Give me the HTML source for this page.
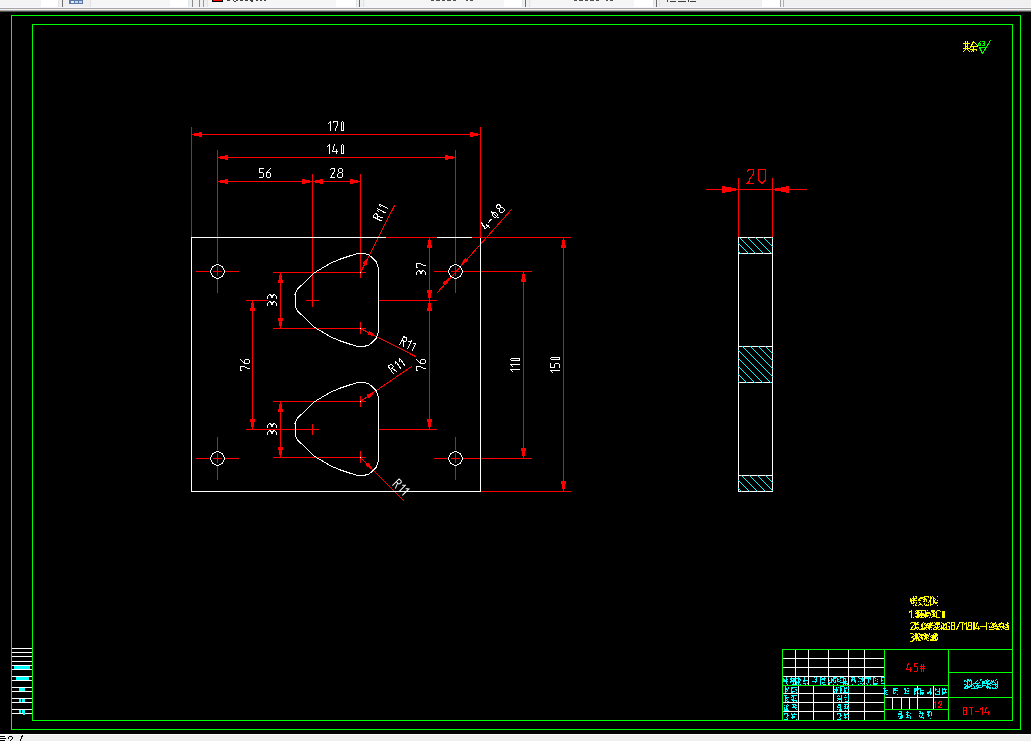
<!DOCTYPE html>
<html><head><meta charset="utf-8"><title>CAD</title>
<style>
html,body{margin:0;padding:0;background:#000;overflow:hidden;}
body{width:1031px;height:741px;position:relative;font-family:"Liberation Sans",sans-serif;}
svg{position:absolute;left:0;top:0;display:block;}
</style></head><body>
<svg width="1031" height="741" viewBox="0 0 1031 741" shape-rendering="crispEdges" fill="none" stroke-width="1" stroke-linecap="square" stroke-linejoin="miter">
<rect x="0" y="0" width="1031" height="741" fill="#000"/>
<rect x="0" y="0" width="1031" height="7" fill="#f0f0f0"/>
<rect x="0" y="0" width="41" height="7" fill="#f3f3f3"/>
<rect x="41" y="0" width="17" height="7" fill="#ffffff"/>
<rect x="58" y="0" width="1" height="7" fill="#e4e4e4"/>
<rect x="62" y="0" width="1" height="7" fill="#707070"/>
<rect x="63" y="0" width="27" height="7" fill="#efefef"/>
<rect x="90" y="0" width="1" height="7" fill="#e0e0e0"/>
<rect x="91" y="0" width="79" height="7" fill="#f5f5f5"/>
<rect x="170" y="0" width="18" height="7" fill="#ffffff"/>
<rect x="188" y="0" width="1" height="7" fill="#dfe3ea"/>
<rect x="192" y="0" width="1" height="7" fill="#8a8a8a"/>
<rect x="199" y="0" width="1" height="7" fill="#8a8a8a"/>
<rect x="203" y="0" width="1" height="7" fill="#9a9a9a"/>
<rect x="207" y="0" width="1" height="7" fill="#dfe3ea"/>
<rect x="208" y="0" width="128" height="7" fill="#f5f5f5"/>
<rect x="336" y="0" width="20" height="7" fill="#ffffff"/>
<rect x="356" y="0" width="1" height="7" fill="#dfe3ea"/>
<rect x="359" y="0" width="1" height="7" fill="#6a6a6a"/>
<rect x="363" y="0" width="1" height="7" fill="#dfe3ea"/>
<rect x="365" y="0" width="139" height="7" fill="#f5f5f5"/>
<rect x="504" y="0" width="18" height="7" fill="#ffffff"/>
<rect x="522" y="0" width="1" height="7" fill="#dfe3ea"/>
<rect x="525" y="0" width="1" height="7" fill="#6a6a6a"/>
<rect x="529" y="0" width="1" height="7" fill="#dfe3ea"/>
<rect x="531" y="0" width="103" height="7" fill="#f5f5f5"/>
<rect x="634" y="0" width="19" height="7" fill="#ffffff"/>
<rect x="653" y="0" width="1" height="7" fill="#dfe3ea"/>
<rect x="656" y="0" width="1" height="7" fill="#6a6a6a"/>
<rect x="659" y="0" width="1" height="7" fill="#dfe3ea"/>
<rect x="660" y="0" width="102" height="7" fill="#f0f0f0"/>
<rect x="762" y="0" width="18" height="7" fill="#ffffff"/>
<rect x="780" y="0" width="1" height="7" fill="#a0a0a0"/>
<rect x="783" y="0" width="1" height="7" fill="#b0b0b0"/>
<rect x="69" y="0" width="14" height="4" fill="#5b79a6"/>
<rect x="71" y="1" width="3" height="2" fill="#e8eef8"/>
<rect x="75" y="1" width="3" height="2" fill="#c8d4e8"/>
<rect x="79" y="1" width="3" height="2" fill="#c8d4e8"/>
<rect x="212" y="0" width="11" height="2" fill="#000000"/>
<rect x="213" y="0" width="9" height="1" fill="#ff0000"/>
<rect x="227" y="0" width="3" height="1" fill="#404040"/>
<rect x="233" y="0" width="1" height="1" fill="#404040"/>
<rect x="236" y="0" width="2" height="1" fill="#404040"/>
<rect x="240" y="0" width="3" height="1" fill="#404040"/>
<rect x="245" y="0" width="3" height="1" fill="#404040"/>
<rect x="250" y="0" width="3" height="1" fill="#404040"/>
<rect x="256" y="0" width="2" height="1" fill="#404040"/>
<rect x="260" y="0" width="2" height="1" fill="#404040"/>
<rect x="264" y="0" width="2" height="1" fill="#404040"/>
<rect x="234" y="1" width="2" height="1" fill="#404040"/>
<rect x="251" y="1" width="2" height="1" fill="#404040"/>
<rect x="431" y="0" width="3" height="1" fill="#505050"/>
<rect x="436" y="0" width="4" height="1" fill="#505050"/>
<rect x="442" y="0" width="3" height="1" fill="#505050"/>
<rect x="447" y="0" width="4" height="1" fill="#505050"/>
<rect x="453" y="0" width="3" height="1" fill="#505050"/>
<rect x="466" y="0" width="2" height="1" fill="#505050"/>
<rect x="470" y="0" width="3" height="1" fill="#505050"/>
<rect x="574" y="0" width="3" height="1" fill="#505050"/>
<rect x="579" y="0" width="4" height="1" fill="#505050"/>
<rect x="585" y="0" width="3" height="1" fill="#505050"/>
<rect x="590" y="0" width="4" height="1" fill="#505050"/>
<rect x="596" y="0" width="3" height="1" fill="#505050"/>
<rect x="606" y="0" width="2" height="1" fill="#505050"/>
<rect x="610" y="0" width="3" height="1" fill="#505050"/>
<rect x="667" y="0" width="1" height="2" fill="#404040"/>
<rect x="670" y="1" width="6" height="1" fill="#404040"/>
<rect x="678" y="1" width="8" height="1" fill="#404040"/>
<rect x="688" y="0" width="1" height="2" fill="#404040"/>
<rect x="690" y="1" width="6" height="1" fill="#404040"/>
<rect x="0" y="7" width="1031" height="1" fill="#f4f7fb"/>
<rect x="0" y="8" width="1031" height="1" fill="#a6a6a6"/>
<rect x="0" y="9" width="1031" height="1" fill="#f2f2f2"/>
<rect x="0" y="10" width="1031" height="1" fill="#a8a8a8"/>
<rect x="0" y="11" width="1031" height="1" fill="#505050"/>
<rect x="0" y="734" width="1031" height="1" fill="#ffffff"/>
<rect x="0" y="735" width="1031" height="6" fill="#efefef"/>
<rect x="0" y="734" width="6" height="7" fill="#ffffff"/>
<rect x="0" y="736" width="5" height="1" fill="#000000"/>
<rect x="0" y="738" width="6" height="1" fill="#000000"/>
<rect x="0" y="740" width="5" height="1" fill="#000000"/>
<path d="M8.50 738.50L8.50 737.50L9.50 736.50L11.50 736.50L12.50 737.50L12.50 738.50L10.50 740.50" stroke="#000000"/>
<path d="M22.50 735.50L21.50 737.50L20.50 740.50" stroke="#000000"/>
<rect x="11" y="15" width="1010" height="1" fill="#00ff00"/>
<rect x="11" y="729" width="1010" height="1" fill="#00ff00"/>
<rect x="11" y="15" width="1" height="715" fill="#00ff00"/>
<rect x="1020" y="15" width="1" height="715" fill="#00ff00"/>
<rect x="32" y="24" width="981" height="1" fill="#00ff00"/>
<rect x="32" y="720" width="981" height="1" fill="#00ff00"/>
<rect x="32" y="24" width="1" height="697" fill="#00ff00"/>
<rect x="1012" y="24" width="1" height="697" fill="#00ff00"/>
<rect x="12" y="648" width="20" height="1" fill="#ffffff"/>
<rect x="12" y="652" width="20" height="1" fill="#ffffff"/>
<rect x="12" y="656" width="20" height="1" fill="#ffffff"/>
<rect x="12" y="661" width="20" height="1" fill="#ffffff"/>
<rect x="12" y="665" width="20" height="1" fill="#ffffff"/>
<rect x="12" y="669" width="20" height="1" fill="#ffffff"/>
<rect x="12" y="676" width="20" height="1" fill="#ffffff"/>
<rect x="12" y="680" width="20" height="1" fill="#ffffff"/>
<rect x="12" y="687" width="20" height="1" fill="#ffffff"/>
<rect x="12" y="691" width="20" height="1" fill="#ffffff"/>
<rect x="12" y="698" width="20" height="1" fill="#ffffff"/>
<rect x="12" y="702" width="20" height="1" fill="#ffffff"/>
<rect x="12" y="709" width="20" height="1" fill="#ffffff"/>
<rect x="12" y="713" width="20" height="1" fill="#ffffff"/>
<rect x="14" y="666" width="16" height="3" fill="#00ffff"/>
<rect x="16" y="677" width="13" height="3" fill="#00ffff"/>
<rect x="19" y="688" width="6" height="3" fill="#00ffff"/>
<rect x="19" y="699" width="2" height="3" fill="#00ffff"/>
<rect x="22" y="699" width="3" height="3" fill="#00ffff"/>
<rect x="19" y="710" width="2" height="3" fill="#00ffff"/>
<rect x="22" y="710" width="3" height="3" fill="#00ffff"/>
<rect x="23" y="713" width="2" height="2" fill="#00ffff"/>
<rect x="191" y="127" width="1" height="110" fill="#ff0000"/>
<rect x="480" y="127" width="1" height="110" fill="#ff0000"/>
<rect x="191" y="134" width="290" height="1" fill="#ff0000"/>
<rect x="194" y="133" width="5" height="3" fill="#ff0000"/>
<rect x="199" y="132" width="3" height="5" fill="#ff0000"/>
<rect x="473" y="133" width="5" height="3" fill="#ff0000"/>
<rect x="470" y="132" width="3" height="5" fill="#ff0000"/>
<path transform="translate(328.50 121.50)" d="M2.00 0.00L2.00 9.00M0.00 2.00L1.00 1.00M5.00 1.00L5.00 0.00L9.00 0.00L9.00 3.00L8.00 6.00L7.00 7.00L7.00 9.00M13.00 9.00L13.00 1.00L14.00 0.00L15.00 1.00L15.00 9.00L13.00 9.00" stroke="#ffffff"/>
<rect x="217" y="150" width="1" height="113" fill="#ff0000"/>
<rect x="455" y="150" width="1" height="113" fill="#ff0000"/>
<rect x="217" y="157" width="239" height="1" fill="#ff0000"/>
<rect x="220" y="156" width="5" height="3" fill="#ff0000"/>
<rect x="225" y="155" width="3" height="5" fill="#ff0000"/>
<rect x="448" y="156" width="5" height="3" fill="#ff0000"/>
<rect x="445" y="155" width="3" height="5" fill="#ff0000"/>
<path transform="translate(327.50 144.50)" d="M2.00 0.00L2.00 9.00M0.00 2.00L1.00 1.00M7.00 0.00L7.00 1.00L6.00 2.00L6.00 5.00L5.00 6.00L5.00 7.00L10.00 7.00M9.00 5.00L9.00 9.00M14.00 9.00L14.00 1.00L15.00 0.00L16.00 1.00L16.00 9.00L14.00 9.00" stroke="#ffffff"/>
<rect x="312" y="174" width="1" height="133" fill="#ff0000"/>
<rect x="360" y="174" width="1" height="104" fill="#ff0000"/>
<rect x="217" y="181" width="144" height="1" fill="#ff0000"/>
<rect x="220" y="180" width="5" height="3" fill="#ff0000"/>
<rect x="225" y="179" width="3" height="5" fill="#ff0000"/>
<rect x="305" y="180" width="5" height="3" fill="#ff0000"/>
<rect x="302" y="179" width="3" height="5" fill="#ff0000"/>
<rect x="315" y="180" width="5" height="3" fill="#ff0000"/>
<rect x="320" y="179" width="3" height="5" fill="#ff0000"/>
<rect x="353" y="180" width="5" height="3" fill="#ff0000"/>
<rect x="350" y="179" width="3" height="5" fill="#ff0000"/>
<path transform="translate(259.50 168.50)" d="M4.00 0.00L0.00 0.00L0.00 4.00L3.00 4.00L4.00 5.00L4.00 8.00L3.00 9.00L0.00 9.00M11.00 0.00L10.00 1.00L8.00 3.00L7.00 4.00L7.00 8.00L8.00 9.00L10.00 9.00L11.00 8.00L11.00 5.00L10.00 4.00L8.00 4.00" stroke="#ffffff"/>
<path transform="translate(330.50 168.50)" d="M0.00 1.00L1.00 0.00L4.00 0.00L4.00 3.00L1.00 7.00L1.00 8.00L0.00 9.00L4.00 9.00M9.00 0.00L11.00 0.00L12.00 1.00L12.00 3.00L11.00 4.00L9.00 4.00L8.00 3.00L8.00 1.00L9.00 0.00M9.00 4.00L7.00 6.00L7.00 8.00L8.00 9.00L11.00 9.00L12.00 8.00L12.00 5.00L11.00 4.00" stroke="#ffffff"/>
<rect x="217" y="150" width="1" height="113" fill="#ff0000"/>
<rect x="217" y="266" width="1" height="10" fill="#ff0000"/>
<rect x="217" y="279" width="1" height="14" fill="#ff0000"/>
<rect x="213" y="271" width="9" height="1" fill="#ff0000"/>
<rect x="196" y="271" width="13" height="1" fill="#ff0000"/>
<rect x="225" y="271" width="14" height="1" fill="#ff0000"/>
<rect x="455" y="150" width="1" height="113" fill="#ff0000"/>
<rect x="455" y="266" width="1" height="10" fill="#ff0000"/>
<rect x="455" y="279" width="1" height="14" fill="#ff0000"/>
<rect x="451" y="271" width="9" height="1" fill="#ff0000"/>
<rect x="434" y="271" width="13" height="1" fill="#ff0000"/>
<rect x="463" y="271" width="69" height="1" fill="#ff0000"/>
<rect x="217" y="437" width="1" height="13" fill="#ff0000"/>
<rect x="217" y="453" width="1" height="10" fill="#ff0000"/>
<rect x="217" y="466" width="1" height="14" fill="#ff0000"/>
<rect x="213" y="458" width="9" height="1" fill="#ff0000"/>
<rect x="196" y="458" width="13" height="1" fill="#ff0000"/>
<rect x="225" y="458" width="14" height="1" fill="#ff0000"/>
<rect x="455" y="437" width="1" height="13" fill="#ff0000"/>
<rect x="455" y="453" width="1" height="10" fill="#ff0000"/>
<rect x="455" y="466" width="1" height="14" fill="#ff0000"/>
<rect x="451" y="458" width="9" height="1" fill="#ff0000"/>
<rect x="434" y="458" width="13" height="1" fill="#ff0000"/>
<rect x="463" y="458" width="69" height="1" fill="#ff0000"/>
<rect x="306" y="300" width="13" height="1" fill="#ff0000"/>
<rect x="273" y="272" width="93" height="1" fill="#ff0000"/>
<rect x="273" y="328" width="93" height="1" fill="#ff0000"/>
<rect x="360" y="322" width="1" height="12" fill="#ff0000"/>
<rect x="378" y="300" width="59" height="1" fill="#ff0000"/>
<rect x="306" y="429" width="13" height="1" fill="#ff0000"/>
<rect x="273" y="401" width="93" height="1" fill="#ff0000"/>
<rect x="273" y="457" width="93" height="1" fill="#ff0000"/>
<rect x="360" y="451" width="1" height="12" fill="#ff0000"/>
<rect x="378" y="429" width="59" height="1" fill="#ff0000"/>
<rect x="360" y="396" width="1" height="11" fill="#ff0000"/>
<rect x="246" y="300" width="22" height="1" fill="#ff0000"/>
<rect x="246" y="429" width="73" height="1" fill="#ff0000"/>
<rect x="312" y="424" width="1" height="11" fill="#ff0000"/>
<rect x="280" y="272" width="1" height="57" fill="#ff0000"/>
<rect x="279" y="275" width="3" height="5" fill="#ff0000"/>
<rect x="278" y="280" width="5" height="3" fill="#ff0000"/>
<rect x="279" y="321" width="3" height="5" fill="#ff0000"/>
<rect x="278" y="318" width="5" height="3" fill="#ff0000"/>
<rect x="280" y="401" width="1" height="57" fill="#ff0000"/>
<rect x="279" y="404" width="3" height="5" fill="#ff0000"/>
<rect x="278" y="409" width="5" height="3" fill="#ff0000"/>
<rect x="279" y="450" width="3" height="5" fill="#ff0000"/>
<rect x="278" y="447" width="5" height="3" fill="#ff0000"/>
<path transform="translate(267.50 305.50) rotate(-90.00)" d="M0.00 0.00L2.00 0.00L4.00 2.00L4.00 3.00L1.00 4.50L4.00 6.00L4.00 7.00L2.00 9.00L0.00 9.00M7.00 0.00L9.00 0.00L11.00 2.00L11.00 3.00L8.00 4.50L11.00 6.00L11.00 7.00L9.00 9.00L7.00 9.00" stroke="#ffffff"/>
<path transform="translate(267.50 434.50) rotate(-90.00)" d="M0.00 0.00L2.00 0.00L4.00 2.00L4.00 3.00L1.00 4.50L4.00 6.00L4.00 7.00L2.00 9.00L0.00 9.00M7.00 0.00L9.00 0.00L11.00 2.00L11.00 3.00L8.00 4.50L11.00 6.00L11.00 7.00L9.00 9.00L7.00 9.00" stroke="#ffffff"/>
<rect x="252" y="300" width="1" height="130" fill="#ff0000"/>
<rect x="251" y="303" width="3" height="5" fill="#ff0000"/>
<rect x="250" y="308" width="5" height="3" fill="#ff0000"/>
<rect x="251" y="422" width="3" height="5" fill="#ff0000"/>
<rect x="250" y="419" width="5" height="3" fill="#ff0000"/>
<path transform="translate(240.50 370.50) rotate(-90.00)" d="M0.00 1.00L0.00 0.00L4.00 0.00L4.00 3.00L3.00 6.00L2.00 7.00L2.00 9.00M11.00 0.00L10.00 1.00L8.00 3.00L7.00 4.00L7.00 8.00L8.00 9.00L10.00 9.00L11.00 8.00L11.00 5.00L10.00 4.00L8.00 4.00" stroke="#ffffff"/>
<rect x="429" y="237" width="1" height="193" fill="#ff0000"/>
<rect x="428" y="240" width="3" height="5" fill="#ff0000"/>
<rect x="427" y="245" width="5" height="3" fill="#ff0000"/>
<rect x="428" y="293" width="3" height="5" fill="#ff0000"/>
<rect x="427" y="290" width="5" height="3" fill="#ff0000"/>
<rect x="428" y="303" width="3" height="5" fill="#ff0000"/>
<rect x="427" y="308" width="5" height="3" fill="#ff0000"/>
<rect x="428" y="422" width="3" height="5" fill="#ff0000"/>
<rect x="427" y="419" width="5" height="3" fill="#ff0000"/>
<path transform="translate(416.50 274.50) rotate(-90.00)" d="M0.00 0.00L2.00 0.00L4.00 2.00L4.00 3.00L1.00 4.50L4.00 6.00L4.00 7.00L2.00 9.00L0.00 9.00M7.00 1.00L7.00 0.00L11.00 0.00L11.00 3.00L10.00 6.00L9.00 7.00L9.00 9.00" stroke="#ffffff"/>
<path transform="translate(416.50 370.50) rotate(-90.00)" d="M0.00 1.00L0.00 0.00L4.00 0.00L4.00 3.00L3.00 6.00L2.00 7.00L2.00 9.00M11.00 0.00L10.00 1.00L8.00 3.00L7.00 4.00L7.00 8.00L8.00 9.00L10.00 9.00L11.00 8.00L11.00 5.00L10.00 4.00L8.00 4.00" stroke="#ffffff"/>
<rect x="523" y="271" width="1" height="188" fill="#ff0000"/>
<rect x="522" y="274" width="3" height="5" fill="#ff0000"/>
<rect x="521" y="279" width="5" height="3" fill="#ff0000"/>
<rect x="522" y="451" width="3" height="5" fill="#ff0000"/>
<rect x="521" y="448" width="5" height="3" fill="#ff0000"/>
<path transform="translate(510.50 371.50) rotate(-90.00)" d="M2.00 0.00L2.00 9.00M0.00 2.00L1.00 1.00M7.00 0.00L7.00 9.00M5.00 2.00L6.00 1.00M11.00 9.00L11.00 1.00L12.00 0.00L13.00 1.00L13.00 9.00L11.00 9.00" stroke="#ffffff"/>
<rect x="563" y="237" width="1" height="255" fill="#ff0000"/>
<rect x="562" y="240" width="3" height="5" fill="#ff0000"/>
<rect x="561" y="245" width="5" height="3" fill="#ff0000"/>
<rect x="562" y="484" width="3" height="5" fill="#ff0000"/>
<rect x="561" y="481" width="5" height="3" fill="#ff0000"/>
<rect x="480" y="491" width="91" height="1" fill="#ff0000"/>
<path transform="translate(550.50 372.50) rotate(-90.00)" d="M2.00 0.00L2.00 9.00M0.00 2.00L1.00 1.00M9.00 0.00L5.00 0.00L5.00 4.00L8.00 4.00L9.00 5.00L9.00 8.00L8.00 9.00L5.00 9.00M13.00 9.00L13.00 1.00L14.00 0.00L15.00 1.00L15.00 9.00L13.00 9.00" stroke="#ffffff"/>
<path d="M360.50 272.50L394.50 205.50" stroke="#ff0000"/>
<path d="M368.96 255.82L366.40 265.74L362.48 263.75Z" fill="#ff0000"/>
<path d="M360.50 328.50L415.50 356.50" stroke="#ff0000"/>
<path d="M377.16 336.98L367.26 334.41L369.25 330.49Z" fill="#ff0000"/>
<path d="M360.50 401.50L411.50 366.50" stroke="#ff0000"/>
<path d="M375.92 390.92L368.92 398.39L366.43 394.76Z" fill="#ff0000"/>
<path d="M360.50 457.50L403.50 500.50" stroke="#ff0000"/>
<path d="M373.72 470.72L365.10 465.21L368.21 462.10Z" fill="#ff0000"/>
<path d="M437.50 292.50L511.50 209.50" stroke="#ff0000"/>
<path d="M460.16 266.28L465.17 257.35L468.46 260.27Z" fill="#ff0000"/>
<path d="M450.84 276.72L445.83 285.65L442.54 282.73Z" fill="#ff0000"/>
<path transform="translate(373.08 216.75) rotate(-63.10)" d="M0.00 9.00L0.00 0.00L3.00 0.00L4.00 1.00L4.00 3.00L3.00 4.00L0.00 4.00M2.00 4.00L4.00 9.00M9.00 0.00L9.00 9.00M7.00 2.00L8.00 1.00M14.00 0.00L14.00 9.00M12.00 2.00L13.00 1.00" stroke="#ffffff"/>
<path transform="translate(403.66 336.58) rotate(27.00)" d="M0.00 9.00L0.00 0.00L3.00 0.00L4.00 1.00L4.00 3.00L3.00 4.00L0.00 4.00M2.00 4.00L4.00 9.00M9.00 0.00L9.00 9.00M7.00 2.00L8.00 1.00M14.00 0.00L14.00 9.00M12.00 2.00L13.00 1.00" stroke="#ffffff"/>
<path transform="translate(388.20 366.22) rotate(-34.50)" d="M0.00 9.00L0.00 0.00L3.00 0.00L4.00 1.00L4.00 3.00L3.00 4.00L0.00 4.00M2.00 4.00L4.00 9.00M9.00 0.00L9.00 9.00M7.00 2.00L8.00 1.00M14.00 0.00L14.00 9.00M12.00 2.00L13.00 1.00" stroke="#ffffff"/>
<path transform="translate(399.07 478.90) rotate(45.00)" d="M0.00 9.00L0.00 0.00L3.00 0.00L4.00 1.00L4.00 3.00L3.00 4.00L0.00 4.00M2.00 4.00L4.00 9.00M9.00 0.00L9.00 9.00M7.00 2.00L8.00 1.00M14.00 0.00L14.00 9.00M12.00 2.00L13.00 1.00" stroke="#ffffff"/>
<path transform="translate(479.98 224.35) rotate(-48.00)" d="M2.00 0.00L2.00 1.00L1.00 2.00L1.00 5.00L0.00 6.00L0.00 7.00L5.00 7.00M4.00 5.00L4.00 9.00M7.50 5.00L11.50 5.00M17.00 0.00L17.00 9.00M16.00 2.00L18.00 2.00L19.00 3.00L19.00 6.00L18.00 7.00L16.00 7.00L15.00 6.00L15.00 3.00L16.00 2.00M24.50 0.00L26.50 0.00L27.50 1.00L27.50 3.00L26.50 4.00L24.50 4.00L23.50 3.00L23.50 1.00L24.50 0.00M24.50 4.00L22.50 6.00L22.50 8.00L23.50 9.00L26.50 9.00L27.50 8.00L27.50 5.00L26.50 4.00" stroke="#ffffff"/>
<rect x="738" y="178" width="1" height="59" fill="#ff0000"/>
<rect x="772" y="178" width="1" height="59" fill="#ff0000"/>
<rect x="706" y="189" width="101" height="1" fill="#ff0000"/>
<rect x="731" y="188" width="5" height="3" fill="#ff0000"/>
<rect x="725" y="187" width="6" height="5" fill="#ff0000"/>
<rect x="722" y="186" width="3" height="7" fill="#ff0000"/>
<rect x="775" y="188" width="6" height="3" fill="#ff0000"/>
<rect x="781" y="187" width="5" height="5" fill="#ff0000"/>
<rect x="786" y="186" width="3" height="7" fill="#ff0000"/>
<path transform="translate(747.50 169.50)" d="M0.00 1.50L1.50 0.00L6.00 0.00L6.00 4.50L1.50 10.50L1.50 12.00L0.00 13.50L6.00 13.50M11.10 0.00L17.85 0.00L17.85 10.50L14.85 13.50L14.10 13.50L11.10 10.50L11.10 0.00" stroke="#ff0000"/>
<rect x="191" y="237" width="290" height="1" fill="#ffffff"/>
<rect x="191" y="491" width="290" height="1" fill="#ffffff"/>
<rect x="191" y="237" width="1" height="255" fill="#ffffff"/>
<rect x="480" y="237" width="1" height="255" fill="#ffffff"/>
<circle cx="217.5" cy="271.5" r="6.8" fill="none" stroke="#ffffff"/>
<circle cx="455.5" cy="271.5" r="6.8" fill="none" stroke="#ffffff"/>
<circle cx="217.5" cy="458.5" r="6.8" fill="none" stroke="#ffffff"/>
<circle cx="455.5" cy="458.5" r="6.8" fill="none" stroke="#ffffff"/>
<path d="M295.00 294.50L297.50 289.00L306.00 281.00L314.00 273.00L321.50 268.50L331.00 263.00L340.50 259.00L349.50 256.00L357.50 253.50L362.50 253.50L368.50 254.50L371.50 257.00L376.00 261.50L378.00 267.00L378.50 272.50L378.50 327.50L378.00 333.00L376.00 338.50L371.50 343.00L368.50 345.50L362.50 346.50L357.50 346.50L349.50 344.00L340.50 341.00L331.00 337.00L321.50 331.50L314.00 327.00L306.00 319.00L297.50 311.00L295.00 305.50L295.00 294.50" stroke="#ffffff"/>
<path d="M295.00 423.50L297.50 418.00L306.00 410.00L314.00 402.00L321.50 397.50L331.00 392.00L340.50 388.00L349.50 385.00L357.50 382.50L362.50 382.50L368.50 383.50L371.50 386.00L376.00 390.50L378.00 396.00L378.50 401.50L378.50 456.50L378.00 462.00L376.00 467.50L371.50 472.00L368.50 474.50L362.50 475.50L357.50 475.50L349.50 473.00L340.50 470.00L331.00 466.00L321.50 460.50L314.00 456.00L306.00 448.00L297.50 440.00L295.00 434.50L295.00 423.50" stroke="#ffffff"/>
<rect x="738" y="237" width="1" height="255" fill="#ffffff"/>
<rect x="772" y="237" width="1" height="255" fill="#ffffff"/>
<rect x="738" y="237" width="35" height="1" fill="#ffffff"/>
<rect x="738" y="253" width="35" height="1" fill="#ffffff"/>
<rect x="738" y="346" width="35" height="1" fill="#ffffff"/>
<rect x="738" y="382" width="35" height="1" fill="#ffffff"/>
<rect x="738" y="475" width="35" height="1" fill="#ffffff"/>
<rect x="738" y="491" width="35" height="1" fill="#ffffff"/>
<rect x="360" y="272" width="1" height="1" fill="#ffffff"/>
<rect x="360" y="328" width="1" height="1" fill="#ffffff"/>
<rect x="360" y="401" width="1" height="1" fill="#ffffff"/>
<rect x="360" y="457" width="1" height="1" fill="#ffffff"/>
<rect x="386" y="237" width="51" height="1" fill="#ff0000"/>
<rect x="472" y="237" width="99" height="1" fill="#ff0000"/>
<path d="M738.50 251.50L740.50 253.50" stroke="#00ffff"/>
<path d="M738.50 243.50L748.50 253.50" stroke="#00ffff"/>
<path d="M739.50 237.50L755.50 253.50" stroke="#00ffff"/>
<path d="M747.50 237.50L763.50 253.50" stroke="#00ffff"/>
<path d="M755.50 237.50L771.50 253.50" stroke="#00ffff"/>
<path d="M763.50 237.50L772.50 246.50" stroke="#00ffff"/>
<path d="M771.50 237.50L772.50 238.50" stroke="#00ffff"/>
<path d="M738.50 381.50L739.50 382.50" stroke="#00ffff"/>
<path d="M738.50 374.50L746.50 382.50" stroke="#00ffff"/>
<path d="M738.50 366.50L754.50 382.50" stroke="#00ffff"/>
<path d="M738.50 358.50L762.50 382.50" stroke="#00ffff"/>
<path d="M738.50 350.50L770.50 382.50" stroke="#00ffff"/>
<path d="M742.50 346.50L772.50 376.50" stroke="#00ffff"/>
<path d="M750.50 346.50L772.50 368.50" stroke="#00ffff"/>
<path d="M758.50 346.50L772.50 360.50" stroke="#00ffff"/>
<path d="M765.50 346.50L772.50 353.50" stroke="#00ffff"/>
<path d="M738.50 488.50L741.50 491.50" stroke="#00ffff"/>
<path d="M738.50 480.50L749.50 491.50" stroke="#00ffff"/>
<path d="M741.50 475.50L757.50 491.50" stroke="#00ffff"/>
<path d="M749.50 475.50L765.50 491.50" stroke="#00ffff"/>
<path d="M757.50 475.50L772.50 490.50" stroke="#00ffff"/>
<path d="M765.50 475.50L772.50 482.50" stroke="#00ffff"/>
<path d="M965.50 41.50L965.50 49.50" stroke="#ffff00"/>
<path d="M967.50 41.50L967.50 49.50" stroke="#ffff00"/>
<path d="M963.50 43.50L969.50 43.50" stroke="#ffff00"/>
<path d="M965.50 46.50L967.50 46.50" stroke="#ffff00"/>
<path d="M963.50 48.50L969.50 48.50" stroke="#ffff00"/>
<path d="M963.50 51.50L965.50 49.50" stroke="#ffff00"/>
<path d="M968.50 50.50L969.50 51.50" stroke="#ffff00"/>
<path d="M970.50 47.50L973.50 41.50L977.50 45.50" stroke="#ffff00"/>
<path d="M971.50 46.50L977.50 46.50" stroke="#ffff00"/>
<path d="M973.50 46.50L973.50 51.50" stroke="#ffff00"/>
<path d="M971.50 51.50L972.50 50.50" stroke="#ffff00"/>
<path d="M975.50 49.50L976.50 50.50" stroke="#ffff00"/>
<path d="M970.50 49.50L976.50 49.50" stroke="#ffff00"/>
<path d="M979.50 47.50L985.50 47.50" stroke="#00ff00"/>
<path d="M979.50 47.50L982.50 53.50L990.50 40.50" stroke="#00ff00"/>
<path d="M980.50 41.50L978.50 43.50L978.50 45.50L980.50 45.50L980.50 43.50L978.50 43.50" stroke="#00ff00"/>
<path d="M982.50 41.50L984.50 41.50L984.50 45.50L982.50 45.50" stroke="#00ff00"/>
<path d="M983.50 43.50L984.50 43.50" stroke="#00ff00"/>
<rect x="913" y="596" width="1" height="1" fill="#ffff00"/>
<rect x="915" y="596" width="2" height="1" fill="#ffff00"/>
<rect x="913" y="597" width="1" height="1" fill="#ffff00"/>
<rect x="916" y="597" width="1" height="1" fill="#ffff00"/>
<rect x="910" y="598" width="1" height="1" fill="#ffff00"/>
<rect x="912" y="598" width="5" height="1" fill="#ffff00"/>
<rect x="910" y="599" width="2" height="1" fill="#ffff00"/>
<rect x="913" y="599" width="2" height="1" fill="#ffff00"/>
<rect x="910" y="600" width="7" height="1" fill="#ffff00"/>
<rect x="910" y="601" width="2" height="1" fill="#ffff00"/>
<rect x="913" y="601" width="1" height="1" fill="#ffff00"/>
<rect x="911" y="602" width="1" height="1" fill="#ffff00"/>
<rect x="913" y="602" width="2" height="1" fill="#ffff00"/>
<rect x="916" y="602" width="1" height="1" fill="#ffff00"/>
<rect x="911" y="603" width="3" height="1" fill="#ffff00"/>
<rect x="916" y="603" width="1" height="1" fill="#ffff00"/>
<rect x="915" y="604" width="1" height="1" fill="#ffff00"/>
<rect x="913" y="605" width="1" height="1" fill="#ffff00"/>
<rect x="915" y="605" width="2" height="1" fill="#ffff00"/>
<rect x="924" y="596" width="1" height="1" fill="#ffff00"/>
<rect x="920" y="597" width="5" height="1" fill="#ffff00"/>
<rect x="919" y="598" width="4" height="1" fill="#ffff00"/>
<rect x="924" y="598" width="1" height="1" fill="#ffff00"/>
<rect x="918" y="599" width="2" height="1" fill="#ffff00"/>
<rect x="923" y="599" width="2" height="1" fill="#ffff00"/>
<rect x="918" y="600" width="3" height="1" fill="#ffff00"/>
<rect x="924" y="600" width="1" height="1" fill="#ffff00"/>
<rect x="923" y="601" width="2" height="1" fill="#ffff00"/>
<rect x="919" y="602" width="1" height="1" fill="#ffff00"/>
<rect x="920" y="603" width="1" height="1" fill="#ffff00"/>
<rect x="924" y="603" width="1" height="1" fill="#ffff00"/>
<rect x="919" y="604" width="3" height="1" fill="#ffff00"/>
<rect x="924" y="604" width="1" height="1" fill="#ffff00"/>
<rect x="918" y="605" width="1" height="1" fill="#ffff00"/>
<rect x="922" y="605" width="1" height="1" fill="#ffff00"/>
<rect x="925" y="596" width="4" height="1" fill="#ffff00"/>
<rect x="930" y="596" width="1" height="1" fill="#ffff00"/>
<rect x="928" y="597" width="1" height="1" fill="#ffff00"/>
<rect x="930" y="597" width="2" height="1" fill="#ffff00"/>
<rect x="925" y="598" width="1" height="1" fill="#ffff00"/>
<rect x="930" y="598" width="2" height="1" fill="#ffff00"/>
<rect x="925" y="599" width="2" height="1" fill="#ffff00"/>
<rect x="930" y="599" width="1" height="1" fill="#ffff00"/>
<rect x="926" y="600" width="1" height="1" fill="#ffff00"/>
<rect x="929" y="600" width="2" height="1" fill="#ffff00"/>
<rect x="926" y="601" width="1" height="1" fill="#ffff00"/>
<rect x="929" y="601" width="2" height="1" fill="#ffff00"/>
<rect x="928" y="602" width="1" height="1" fill="#ffff00"/>
<rect x="930" y="602" width="1" height="1" fill="#ffff00"/>
<rect x="930" y="603" width="1" height="1" fill="#ffff00"/>
<rect x="926" y="604" width="1" height="1" fill="#ffff00"/>
<rect x="928" y="604" width="1" height="1" fill="#ffff00"/>
<rect x="930" y="604" width="2" height="1" fill="#ffff00"/>
<rect x="925" y="605" width="4" height="1" fill="#ffff00"/>
<rect x="930" y="605" width="1" height="1" fill="#ffff00"/>
<rect x="932" y="596" width="1" height="1" fill="#ffff00"/>
<rect x="937" y="596" width="1" height="1" fill="#ffff00"/>
<rect x="933" y="597" width="1" height="1" fill="#ffff00"/>
<rect x="933" y="598" width="2" height="1" fill="#ffff00"/>
<rect x="933" y="599" width="1" height="1" fill="#ffff00"/>
<rect x="935" y="599" width="1" height="1" fill="#ffff00"/>
<rect x="933" y="600" width="2" height="1" fill="#ffff00"/>
<rect x="937" y="600" width="1" height="1" fill="#ffff00"/>
<rect x="933" y="601" width="2" height="1" fill="#ffff00"/>
<rect x="933" y="602" width="5" height="1" fill="#ffff00"/>
<rect x="933" y="603" width="1" height="1" fill="#ffff00"/>
<rect x="935" y="603" width="2" height="1" fill="#ffff00"/>
<rect x="932" y="604" width="1" height="1" fill="#ffff00"/>
<rect x="937" y="605" width="1" height="1" fill="#ffff00"/>
<path transform="translate(909.50 610.50)" d="M1.60 0.00L1.60 7.20M0.00 1.60L0.80 0.80" stroke="#ffff00"/>
<rect x="913" y="617" width="1" height="1" fill="#ffff00"/>
<rect x="916" y="610" width="4" height="1" fill="#ffff00"/>
<rect x="915" y="611" width="1" height="1" fill="#ffff00"/>
<rect x="917" y="611" width="2" height="1" fill="#ffff00"/>
<rect x="916" y="612" width="4" height="1" fill="#ffff00"/>
<rect x="915" y="613" width="4" height="1" fill="#ffff00"/>
<rect x="917" y="614" width="3" height="1" fill="#ffff00"/>
<rect x="917" y="615" width="3" height="1" fill="#ffff00"/>
<rect x="915" y="616" width="5" height="1" fill="#ffff00"/>
<rect x="916" y="617" width="3" height="1" fill="#ffff00"/>
<rect x="920" y="610" width="5" height="1" fill="#ffff00"/>
<rect x="921" y="611" width="1" height="1" fill="#ffff00"/>
<rect x="921" y="612" width="1" height="1" fill="#ffff00"/>
<rect x="920" y="613" width="4" height="1" fill="#ffff00"/>
<rect x="920" y="614" width="5" height="1" fill="#ffff00"/>
<rect x="920" y="615" width="5" height="1" fill="#ffff00"/>
<rect x="921" y="616" width="1" height="1" fill="#ffff00"/>
<rect x="924" y="616" width="1" height="1" fill="#ffff00"/>
<rect x="920" y="617" width="4" height="1" fill="#ffff00"/>
<rect x="925" y="610" width="1" height="1" fill="#ffff00"/>
<rect x="927" y="610" width="1" height="1" fill="#ffff00"/>
<rect x="925" y="611" width="1" height="1" fill="#ffff00"/>
<rect x="925" y="612" width="5" height="1" fill="#ffff00"/>
<rect x="925" y="613" width="6" height="1" fill="#ffff00"/>
<rect x="925" y="614" width="2" height="1" fill="#ffff00"/>
<rect x="930" y="614" width="1" height="1" fill="#ffff00"/>
<rect x="925" y="615" width="4" height="1" fill="#ffff00"/>
<rect x="930" y="615" width="1" height="1" fill="#ffff00"/>
<rect x="925" y="616" width="3" height="1" fill="#ffff00"/>
<rect x="925" y="617" width="1" height="1" fill="#ffff00"/>
<rect x="929" y="617" width="1" height="1" fill="#ffff00"/>
<rect x="931" y="610" width="4" height="1" fill="#ffff00"/>
<rect x="931" y="611" width="4" height="1" fill="#ffff00"/>
<rect x="932" y="612" width="2" height="1" fill="#ffff00"/>
<rect x="935" y="612" width="1" height="1" fill="#ffff00"/>
<rect x="933" y="613" width="2" height="1" fill="#ffff00"/>
<rect x="932" y="614" width="3" height="1" fill="#ffff00"/>
<rect x="933" y="615" width="2" height="1" fill="#ffff00"/>
<rect x="932" y="616" width="4" height="1" fill="#ffff00"/>
<rect x="931" y="617" width="1" height="1" fill="#ffff00"/>
<path transform="translate(936.50 610.50)" d="M3.60 0.80L2.70 0.00L0.90 0.00L0.00 0.80L0.00 6.40L0.90 7.20L2.70 7.20L3.60 6.40" stroke="#ffff00"/>
<rect x="942" y="611" width="3" height="7" fill="#ffff00"/>
<path transform="translate(910.50 622.50)" d="M0.00 0.80L0.90 0.00L3.60 0.00L3.60 2.40L0.90 5.60L0.90 6.40L0.00 7.20L3.60 7.20" stroke="#ffff00"/>
<rect x="914" y="628" width="1" height="2" fill="#ffff00"/>
<rect x="915" y="622" width="1" height="1" fill="#ffff00"/>
<rect x="917" y="622" width="2" height="1" fill="#ffff00"/>
<rect x="915" y="623" width="3" height="1" fill="#ffff00"/>
<rect x="915" y="624" width="4" height="1" fill="#ffff00"/>
<rect x="915" y="625" width="1" height="1" fill="#ffff00"/>
<rect x="915" y="626" width="1" height="1" fill="#ffff00"/>
<rect x="915" y="627" width="4" height="1" fill="#ffff00"/>
<rect x="915" y="628" width="2" height="1" fill="#ffff00"/>
<rect x="918" y="628" width="1" height="1" fill="#ffff00"/>
<rect x="917" y="629" width="1" height="1" fill="#ffff00"/>
<rect x="919" y="629" width="1" height="1" fill="#ffff00"/>
<rect x="923" y="622" width="1" height="1" fill="#ffff00"/>
<rect x="922" y="623" width="1" height="1" fill="#ffff00"/>
<rect x="924" y="623" width="1" height="1" fill="#ffff00"/>
<rect x="921" y="624" width="2" height="1" fill="#ffff00"/>
<rect x="924" y="624" width="1" height="1" fill="#ffff00"/>
<rect x="921" y="625" width="2" height="1" fill="#ffff00"/>
<rect x="921" y="626" width="2" height="1" fill="#ffff00"/>
<rect x="922" y="627" width="1" height="1" fill="#ffff00"/>
<rect x="924" y="627" width="1" height="1" fill="#ffff00"/>
<rect x="921" y="628" width="4" height="1" fill="#ffff00"/>
<rect x="920" y="629" width="5" height="1" fill="#ffff00"/>
<rect x="925" y="623" width="1" height="1" fill="#ffff00"/>
<rect x="927" y="623" width="3" height="1" fill="#ffff00"/>
<rect x="926" y="624" width="2" height="1" fill="#ffff00"/>
<rect x="929" y="624" width="1" height="1" fill="#ffff00"/>
<rect x="925" y="625" width="5" height="1" fill="#ffff00"/>
<rect x="926" y="626" width="1" height="1" fill="#ffff00"/>
<rect x="928" y="626" width="2" height="1" fill="#ffff00"/>
<rect x="925" y="627" width="5" height="1" fill="#ffff00"/>
<rect x="925" y="628" width="1" height="1" fill="#ffff00"/>
<rect x="928" y="628" width="2" height="1" fill="#ffff00"/>
<rect x="926" y="629" width="1" height="1" fill="#ffff00"/>
<rect x="929" y="629" width="1" height="1" fill="#ffff00"/>
<rect x="930" y="622" width="1" height="1" fill="#ffff00"/>
<rect x="932" y="622" width="1" height="1" fill="#ffff00"/>
<rect x="934" y="622" width="1" height="1" fill="#ffff00"/>
<rect x="930" y="623" width="3" height="1" fill="#ffff00"/>
<rect x="930" y="624" width="2" height="1" fill="#ffff00"/>
<rect x="930" y="625" width="5" height="1" fill="#ffff00"/>
<rect x="930" y="626" width="1" height="1" fill="#ffff00"/>
<rect x="930" y="627" width="2" height="1" fill="#ffff00"/>
<rect x="934" y="627" width="1" height="1" fill="#ffff00"/>
<rect x="933" y="628" width="1" height="1" fill="#ffff00"/>
<rect x="931" y="629" width="1" height="1" fill="#ffff00"/>
<rect x="933" y="629" width="2" height="1" fill="#ffff00"/>
<rect x="936" y="622" width="4" height="1" fill="#ffff00"/>
<rect x="935" y="623" width="5" height="1" fill="#ffff00"/>
<rect x="935" y="624" width="5" height="1" fill="#ffff00"/>
<rect x="937" y="625" width="1" height="1" fill="#ffff00"/>
<rect x="935" y="626" width="1" height="1" fill="#ffff00"/>
<rect x="937" y="626" width="1" height="1" fill="#ffff00"/>
<rect x="939" y="626" width="1" height="1" fill="#ffff00"/>
<rect x="935" y="627" width="4" height="1" fill="#ffff00"/>
<rect x="936" y="628" width="2" height="1" fill="#ffff00"/>
<rect x="935" y="629" width="2" height="1" fill="#ffff00"/>
<rect x="938" y="629" width="2" height="1" fill="#ffff00"/>
<rect x="941" y="622" width="1" height="1" fill="#ffff00"/>
<rect x="942" y="623" width="2" height="1" fill="#ffff00"/>
<rect x="945" y="623" width="1" height="1" fill="#ffff00"/>
<rect x="943" y="624" width="3" height="1" fill="#ffff00"/>
<rect x="941" y="625" width="1" height="1" fill="#ffff00"/>
<rect x="943" y="625" width="2" height="1" fill="#ffff00"/>
<rect x="941" y="626" width="1" height="1" fill="#ffff00"/>
<rect x="943" y="626" width="1" height="1" fill="#ffff00"/>
<rect x="941" y="627" width="3" height="1" fill="#ffff00"/>
<rect x="945" y="627" width="1" height="1" fill="#ffff00"/>
<rect x="940" y="628" width="5" height="1" fill="#ffff00"/>
<rect x="941" y="629" width="1" height="1" fill="#ffff00"/>
<rect x="943" y="629" width="3" height="1" fill="#ffff00"/>
<path transform="translate(946.50 622.50)" d="M3.40 0.80L2.55 0.00L0.85 0.00L0.00 0.80L0.00 6.40L0.85 7.20L2.55 7.20L3.40 6.40L3.40 4.00L1.70 4.00" stroke="#ffff00"/>
<path transform="translate(951.50 622.50)" d="M0.00 3.20L2.55 3.20L3.40 2.40L3.40 0.80L2.55 0.00L0.00 0.00L0.00 7.20L2.55 7.20L3.40 6.40L3.40 4.00L2.55 3.20" stroke="#ffff00"/>
<path transform="translate(956.50 622.50)" d="M0.00 7.20L3.40 0.00" stroke="#ffff00"/>
<path transform="translate(960.50 622.50)" d="M0.00 0.00L3.40 0.00M1.70 0.00L1.70 7.20" stroke="#ffff00"/>
<path transform="translate(964.50 622.50)" d="M1.70 0.00L1.70 7.20M0.00 1.60L0.85 0.80" stroke="#ffff00"/>
<path transform="translate(967.50 622.50)" d="M1.70 0.00L3.40 0.00L4.25 0.80L4.25 2.40L3.40 3.20L1.70 3.20L0.85 2.40L0.85 0.80L1.70 0.00M1.70 3.20L0.00 4.80L0.00 6.40L0.85 7.20L3.40 7.20L4.25 6.40L4.25 4.00L3.40 3.20" stroke="#ffff00"/>
<path transform="translate(975.50 622.50)" d="M1.70 0.00L1.70 0.80L0.85 1.60L0.85 4.00L0.00 4.80L0.00 5.60L4.25 5.60M3.40 4.00L3.40 7.20" stroke="#ffff00"/>
<rect x="973" y="622" width="2" height="8" fill="#ffff00"/>
<rect x="980" y="626" width="6" height="1" fill="#ffff00"/>
<rect x="986" y="622" width="1" height="8" fill="#ffff00"/>
<rect x="991" y="622" width="1" height="1" fill="#ffff00"/>
<rect x="988" y="623" width="1" height="1" fill="#ffff00"/>
<rect x="990" y="623" width="1" height="1" fill="#ffff00"/>
<rect x="992" y="623" width="2" height="1" fill="#ffff00"/>
<rect x="992" y="624" width="2" height="1" fill="#ffff00"/>
<rect x="992" y="625" width="2" height="1" fill="#ffff00"/>
<rect x="989" y="626" width="1" height="1" fill="#ffff00"/>
<rect x="991" y="626" width="1" height="1" fill="#ffff00"/>
<rect x="993" y="626" width="1" height="1" fill="#ffff00"/>
<rect x="989" y="627" width="5" height="1" fill="#ffff00"/>
<rect x="989" y="629" width="5" height="1" fill="#ffff00"/>
<rect x="995" y="622" width="1" height="1" fill="#ffff00"/>
<rect x="994" y="623" width="2" height="1" fill="#ffff00"/>
<rect x="999" y="623" width="1" height="1" fill="#ffff00"/>
<rect x="994" y="624" width="1" height="1" fill="#ffff00"/>
<rect x="996" y="624" width="1" height="1" fill="#ffff00"/>
<rect x="998" y="624" width="2" height="1" fill="#ffff00"/>
<rect x="995" y="625" width="2" height="1" fill="#ffff00"/>
<rect x="999" y="625" width="1" height="1" fill="#ffff00"/>
<rect x="994" y="626" width="6" height="1" fill="#ffff00"/>
<rect x="997" y="627" width="1" height="1" fill="#ffff00"/>
<rect x="994" y="628" width="5" height="1" fill="#ffff00"/>
<rect x="996" y="629" width="4" height="1" fill="#ffff00"/>
<rect x="1001" y="622" width="1" height="1" fill="#ffff00"/>
<rect x="1000" y="623" width="4" height="1" fill="#ffff00"/>
<rect x="1000" y="624" width="1" height="1" fill="#ffff00"/>
<rect x="1003" y="624" width="1" height="1" fill="#ffff00"/>
<rect x="1003" y="625" width="1" height="1" fill="#ffff00"/>
<rect x="1000" y="626" width="5" height="1" fill="#ffff00"/>
<rect x="1000" y="627" width="1" height="1" fill="#ffff00"/>
<rect x="1002" y="627" width="2" height="1" fill="#ffff00"/>
<rect x="1003" y="628" width="2" height="1" fill="#ffff00"/>
<rect x="1001" y="629" width="1" height="1" fill="#ffff00"/>
<rect x="1007" y="622" width="1" height="1" fill="#ffff00"/>
<rect x="1007" y="623" width="2" height="1" fill="#ffff00"/>
<rect x="1005" y="624" width="3" height="1" fill="#ffff00"/>
<rect x="1006" y="625" width="3" height="1" fill="#ffff00"/>
<rect x="1007" y="626" width="2" height="1" fill="#ffff00"/>
<rect x="1005" y="627" width="4" height="1" fill="#ffff00"/>
<rect x="1008" y="628" width="1" height="1" fill="#ffff00"/>
<rect x="1005" y="629" width="4" height="1" fill="#ffff00"/>
<path transform="translate(910.50 633.50)" d="M0.00 0.00L1.80 0.00L3.60 1.70L3.60 2.55L0.90 3.82L3.60 5.10L3.60 5.95L1.80 7.65L0.00 7.65" stroke="#ffff00"/>
<rect x="915" y="633" width="2" height="1" fill="#ffff00"/>
<rect x="918" y="633" width="2" height="1" fill="#ffff00"/>
<rect x="915" y="634" width="3" height="1" fill="#ffff00"/>
<rect x="919" y="634" width="1" height="1" fill="#ffff00"/>
<rect x="915" y="635" width="3" height="1" fill="#ffff00"/>
<rect x="915" y="636" width="3" height="1" fill="#ffff00"/>
<rect x="919" y="636" width="1" height="1" fill="#ffff00"/>
<rect x="915" y="637" width="4" height="1" fill="#ffff00"/>
<rect x="915" y="638" width="4" height="1" fill="#ffff00"/>
<rect x="916" y="639" width="1" height="1" fill="#ffff00"/>
<rect x="918" y="639" width="2" height="1" fill="#ffff00"/>
<rect x="916" y="640" width="1" height="1" fill="#ffff00"/>
<rect x="918" y="640" width="2" height="1" fill="#ffff00"/>
<rect x="924" y="633" width="1" height="1" fill="#ffff00"/>
<rect x="920" y="634" width="4" height="1" fill="#ffff00"/>
<rect x="920" y="635" width="5" height="1" fill="#ffff00"/>
<rect x="921" y="636" width="1" height="1" fill="#ffff00"/>
<rect x="924" y="636" width="1" height="1" fill="#ffff00"/>
<rect x="920" y="637" width="3" height="1" fill="#ffff00"/>
<rect x="921" y="638" width="2" height="1" fill="#ffff00"/>
<rect x="924" y="638" width="1" height="1" fill="#ffff00"/>
<rect x="922" y="639" width="1" height="1" fill="#ffff00"/>
<rect x="924" y="639" width="1" height="1" fill="#ffff00"/>
<rect x="920" y="640" width="1" height="1" fill="#ffff00"/>
<rect x="925" y="633" width="1" height="1" fill="#ffff00"/>
<rect x="929" y="633" width="1" height="1" fill="#ffff00"/>
<rect x="925" y="634" width="3" height="1" fill="#ffff00"/>
<rect x="929" y="634" width="1" height="1" fill="#ffff00"/>
<rect x="925" y="635" width="4" height="1" fill="#ffff00"/>
<rect x="925" y="636" width="2" height="1" fill="#ffff00"/>
<rect x="928" y="636" width="1" height="1" fill="#ffff00"/>
<rect x="925" y="637" width="3" height="1" fill="#ffff00"/>
<rect x="925" y="638" width="2" height="1" fill="#ffff00"/>
<rect x="928" y="638" width="1" height="1" fill="#ffff00"/>
<rect x="926" y="639" width="1" height="1" fill="#ffff00"/>
<rect x="927" y="640" width="2" height="1" fill="#ffff00"/>
<rect x="934" y="633" width="1" height="1" fill="#ffff00"/>
<rect x="933" y="634" width="1" height="1" fill="#ffff00"/>
<rect x="931" y="635" width="4" height="1" fill="#ffff00"/>
<rect x="930" y="636" width="1" height="1" fill="#ffff00"/>
<rect x="932" y="636" width="3" height="1" fill="#ffff00"/>
<rect x="931" y="637" width="4" height="1" fill="#ffff00"/>
<rect x="932" y="638" width="3" height="1" fill="#ffff00"/>
<rect x="930" y="639" width="4" height="1" fill="#ffff00"/>
<rect x="930" y="640" width="5" height="1" fill="#ffff00"/>
<rect x="935" y="633" width="2" height="1" fill="#ffff00"/>
<rect x="935" y="634" width="3" height="1" fill="#ffff00"/>
<rect x="935" y="635" width="3" height="1" fill="#ffff00"/>
<rect x="935" y="636" width="2" height="1" fill="#ffff00"/>
<rect x="935" y="637" width="1" height="1" fill="#ffff00"/>
<rect x="937" y="637" width="1" height="1" fill="#ffff00"/>
<rect x="935" y="638" width="1" height="1" fill="#ffff00"/>
<rect x="937" y="638" width="1" height="1" fill="#ffff00"/>
<rect x="935" y="639" width="3" height="1" fill="#ffff00"/>
<rect x="935" y="640" width="2" height="1" fill="#ffff00"/>
<rect x="782" y="649" width="231" height="1" fill="#00ff00"/>
<rect x="782" y="649" width="1" height="72" fill="#00ff00"/>
<rect x="884" y="649" width="1" height="72" fill="#00ff00"/>
<rect x="948" y="649" width="1" height="72" fill="#00ff00"/>
<rect x="782" y="685" width="167" height="1" fill="#00ff00"/>
<rect x="884" y="709" width="65" height="1" fill="#00ff00"/>
<rect x="948" y="672" width="65" height="1" fill="#00ff00"/>
<rect x="948" y="697" width="65" height="1" fill="#00ff00"/>
<rect x="783" y="658" width="101" height="1" fill="#ffffff"/>
<rect x="783" y="667" width="101" height="1" fill="#ffffff"/>
<rect x="783" y="676" width="101" height="1" fill="#ffffff"/>
<rect x="795" y="650" width="1" height="35" fill="#ffffff"/>
<rect x="808" y="650" width="1" height="35" fill="#ffffff"/>
<rect x="828" y="650" width="1" height="35" fill="#ffffff"/>
<rect x="848" y="650" width="1" height="35" fill="#ffffff"/>
<rect x="864" y="650" width="1" height="35" fill="#ffffff"/>
<rect x="783" y="693" width="101" height="1" fill="#ffffff"/>
<rect x="783" y="702" width="101" height="1" fill="#ffffff"/>
<rect x="783" y="711" width="101" height="1" fill="#ffffff"/>
<rect x="798" y="686" width="1" height="34" fill="#ffffff"/>
<rect x="813" y="686" width="1" height="34" fill="#ffffff"/>
<rect x="833" y="686" width="1" height="34" fill="#ffffff"/>
<rect x="848" y="686" width="1" height="34" fill="#ffffff"/>
<rect x="864" y="686" width="1" height="34" fill="#ffffff"/>
<rect x="885" y="697" width="63" height="1" fill="#ffffff"/>
<rect x="917" y="686" width="1" height="23" fill="#ffffff"/>
<rect x="933" y="686" width="1" height="23" fill="#ffffff"/>
<rect x="892" y="698" width="1" height="11" fill="#ffffff"/>
<rect x="901" y="698" width="1" height="11" fill="#ffffff"/>
<rect x="909" y="698" width="1" height="11" fill="#ffffff"/>
<rect x="786" y="677" width="1" height="1" fill="#00ffff"/>
<rect x="783" y="678" width="1" height="1" fill="#00ffff"/>
<rect x="786" y="678" width="1" height="1" fill="#00ffff"/>
<rect x="783" y="679" width="2" height="1" fill="#00ffff"/>
<rect x="786" y="679" width="2" height="1" fill="#00ffff"/>
<rect x="783" y="680" width="4" height="1" fill="#00ffff"/>
<rect x="783" y="681" width="5" height="1" fill="#00ffff"/>
<rect x="786" y="682" width="1" height="1" fill="#00ffff"/>
<rect x="786" y="683" width="1" height="1" fill="#00ffff"/>
<rect x="787" y="684" width="1" height="1" fill="#00ffff"/>
<rect x="791" y="677" width="1" height="1" fill="#00ffff"/>
<rect x="790" y="678" width="5" height="1" fill="#00ffff"/>
<rect x="790" y="679" width="2" height="1" fill="#00ffff"/>
<rect x="793" y="679" width="2" height="1" fill="#00ffff"/>
<rect x="791" y="680" width="4" height="1" fill="#00ffff"/>
<rect x="790" y="681" width="5" height="1" fill="#00ffff"/>
<rect x="790" y="682" width="1" height="1" fill="#00ffff"/>
<rect x="793" y="682" width="1" height="1" fill="#00ffff"/>
<rect x="793" y="683" width="1" height="1" fill="#00ffff"/>
<rect x="792" y="684" width="3" height="1" fill="#00ffff"/>
<rect x="798" y="677" width="1" height="1" fill="#00ffff"/>
<rect x="796" y="678" width="4" height="1" fill="#00ffff"/>
<rect x="798" y="679" width="3" height="1" fill="#00ffff"/>
<rect x="798" y="680" width="1" height="1" fill="#00ffff"/>
<rect x="800" y="680" width="1" height="1" fill="#00ffff"/>
<rect x="796" y="681" width="1" height="1" fill="#00ffff"/>
<rect x="798" y="681" width="2" height="1" fill="#00ffff"/>
<rect x="796" y="682" width="4" height="1" fill="#00ffff"/>
<rect x="796" y="683" width="1" height="1" fill="#00ffff"/>
<rect x="798" y="683" width="1" height="1" fill="#00ffff"/>
<rect x="796" y="684" width="1" height="1" fill="#00ffff"/>
<rect x="798" y="684" width="1" height="1" fill="#00ffff"/>
<rect x="800" y="684" width="1" height="1" fill="#00ffff"/>
<rect x="804" y="677" width="1" height="1" fill="#00ffff"/>
<rect x="804" y="678" width="1" height="1" fill="#00ffff"/>
<rect x="804" y="679" width="1" height="1" fill="#00ffff"/>
<rect x="803" y="680" width="5" height="1" fill="#00ffff"/>
<rect x="803" y="681" width="2" height="1" fill="#00ffff"/>
<rect x="803" y="683" width="3" height="1" fill="#00ffff"/>
<rect x="807" y="683" width="1" height="1" fill="#00ffff"/>
<rect x="805" y="684" width="1" height="1" fill="#00ffff"/>
<rect x="814" y="677" width="1" height="1" fill="#00ffff"/>
<rect x="816" y="677" width="1" height="1" fill="#00ffff"/>
<rect x="816" y="678" width="1" height="1" fill="#00ffff"/>
<rect x="815" y="679" width="2" height="1" fill="#00ffff"/>
<rect x="816" y="680" width="1" height="1" fill="#00ffff"/>
<rect x="812" y="681" width="5" height="1" fill="#00ffff"/>
<rect x="815" y="682" width="1" height="1" fill="#00ffff"/>
<rect x="820" y="677" width="2" height="1" fill="#00ffff"/>
<rect x="824" y="677" width="1" height="1" fill="#00ffff"/>
<rect x="820" y="678" width="1" height="1" fill="#00ffff"/>
<rect x="822" y="678" width="4" height="1" fill="#00ffff"/>
<rect x="820" y="679" width="5" height="1" fill="#00ffff"/>
<rect x="820" y="680" width="1" height="1" fill="#00ffff"/>
<rect x="824" y="680" width="1" height="1" fill="#00ffff"/>
<rect x="820" y="681" width="1" height="1" fill="#00ffff"/>
<rect x="820" y="682" width="1" height="1" fill="#00ffff"/>
<rect x="822" y="682" width="3" height="1" fill="#00ffff"/>
<rect x="820" y="683" width="1" height="1" fill="#00ffff"/>
<rect x="822" y="683" width="1" height="1" fill="#00ffff"/>
<rect x="820" y="684" width="1" height="1" fill="#00ffff"/>
<rect x="823" y="684" width="3" height="1" fill="#00ffff"/>
<rect x="828" y="677" width="1" height="1" fill="#00ffff"/>
<rect x="831" y="678" width="1" height="1" fill="#00ffff"/>
<rect x="831" y="679" width="1" height="1" fill="#00ffff"/>
<rect x="829" y="680" width="1" height="1" fill="#00ffff"/>
<rect x="831" y="680" width="1" height="1" fill="#00ffff"/>
<rect x="831" y="681" width="1" height="1" fill="#00ffff"/>
<rect x="828" y="682" width="4" height="1" fill="#00ffff"/>
<rect x="829" y="683" width="1" height="1" fill="#00ffff"/>
<rect x="829" y="684" width="1" height="1" fill="#00ffff"/>
<rect x="833" y="677" width="3" height="1" fill="#00ffff"/>
<rect x="833" y="678" width="3" height="1" fill="#00ffff"/>
<rect x="832" y="679" width="2" height="1" fill="#00ffff"/>
<rect x="832" y="680" width="2" height="1" fill="#00ffff"/>
<rect x="835" y="680" width="1" height="1" fill="#00ffff"/>
<rect x="833" y="681" width="1" height="1" fill="#00ffff"/>
<rect x="835" y="681" width="1" height="1" fill="#00ffff"/>
<rect x="834" y="682" width="2" height="1" fill="#00ffff"/>
<rect x="833" y="684" width="1" height="1" fill="#00ffff"/>
<rect x="836" y="677" width="1" height="1" fill="#00ffff"/>
<rect x="837" y="678" width="1" height="1" fill="#00ffff"/>
<rect x="837" y="679" width="2" height="1" fill="#00ffff"/>
<rect x="837" y="680" width="1" height="1" fill="#00ffff"/>
<rect x="837" y="681" width="3" height="1" fill="#00ffff"/>
<rect x="837" y="684" width="1" height="1" fill="#00ffff"/>
<rect x="840" y="677" width="4" height="1" fill="#00ffff"/>
<rect x="840" y="678" width="1" height="1" fill="#00ffff"/>
<rect x="843" y="678" width="1" height="1" fill="#00ffff"/>
<rect x="843" y="679" width="1" height="1" fill="#00ffff"/>
<rect x="840" y="680" width="1" height="1" fill="#00ffff"/>
<rect x="843" y="680" width="1" height="1" fill="#00ffff"/>
<rect x="843" y="681" width="1" height="1" fill="#00ffff"/>
<rect x="840" y="682" width="4" height="1" fill="#00ffff"/>
<rect x="843" y="683" width="1" height="1" fill="#00ffff"/>
<rect x="843" y="684" width="1" height="1" fill="#00ffff"/>
<rect x="844" y="678" width="2" height="1" fill="#00ffff"/>
<rect x="845" y="679" width="1" height="1" fill="#00ffff"/>
<rect x="845" y="680" width="1" height="1" fill="#00ffff"/>
<rect x="844" y="681" width="3" height="1" fill="#00ffff"/>
<rect x="844" y="682" width="2" height="1" fill="#00ffff"/>
<rect x="844" y="683" width="4" height="1" fill="#00ffff"/>
<rect x="845" y="684" width="1" height="1" fill="#00ffff"/>
<rect x="847" y="684" width="1" height="1" fill="#00ffff"/>
<rect x="851" y="677" width="4" height="1" fill="#00ffff"/>
<rect x="852" y="678" width="1" height="1" fill="#00ffff"/>
<rect x="854" y="678" width="1" height="1" fill="#00ffff"/>
<rect x="851" y="679" width="4" height="1" fill="#00ffff"/>
<rect x="851" y="680" width="2" height="1" fill="#00ffff"/>
<rect x="854" y="680" width="2" height="1" fill="#00ffff"/>
<rect x="851" y="681" width="1" height="1" fill="#00ffff"/>
<rect x="854" y="681" width="2" height="1" fill="#00ffff"/>
<rect x="855" y="682" width="1" height="1" fill="#00ffff"/>
<rect x="852" y="684" width="1" height="1" fill="#00ffff"/>
<rect x="858" y="677" width="1" height="1" fill="#00ffff"/>
<rect x="862" y="677" width="1" height="1" fill="#00ffff"/>
<rect x="859" y="678" width="5" height="1" fill="#00ffff"/>
<rect x="861" y="679" width="3" height="1" fill="#00ffff"/>
<rect x="862" y="680" width="2" height="1" fill="#00ffff"/>
<rect x="858" y="681" width="1" height="1" fill="#00ffff"/>
<rect x="860" y="681" width="1" height="1" fill="#00ffff"/>
<rect x="862" y="681" width="1" height="1" fill="#00ffff"/>
<rect x="860" y="683" width="2" height="1" fill="#00ffff"/>
<rect x="863" y="683" width="1" height="1" fill="#00ffff"/>
<rect x="858" y="684" width="1" height="1" fill="#00ffff"/>
<rect x="862" y="684" width="1" height="1" fill="#00ffff"/>
<rect x="865" y="677" width="6" height="1" fill="#00ffff"/>
<rect x="865" y="678" width="6" height="1" fill="#00ffff"/>
<rect x="868" y="679" width="1" height="1" fill="#00ffff"/>
<rect x="870" y="679" width="1" height="1" fill="#00ffff"/>
<rect x="868" y="680" width="1" height="1" fill="#00ffff"/>
<rect x="868" y="681" width="1" height="1" fill="#00ffff"/>
<rect x="868" y="682" width="1" height="1" fill="#00ffff"/>
<rect x="866" y="683" width="1" height="1" fill="#00ffff"/>
<rect x="867" y="684" width="1" height="1" fill="#00ffff"/>
<rect x="870" y="684" width="1" height="1" fill="#00ffff"/>
<rect x="873" y="677" width="2" height="1" fill="#00ffff"/>
<rect x="873" y="678" width="1" height="1" fill="#00ffff"/>
<rect x="875" y="678" width="1" height="1" fill="#00ffff"/>
<rect x="873" y="679" width="1" height="1" fill="#00ffff"/>
<rect x="877" y="679" width="1" height="1" fill="#00ffff"/>
<rect x="873" y="680" width="1" height="1" fill="#00ffff"/>
<rect x="875" y="680" width="1" height="1" fill="#00ffff"/>
<rect x="873" y="681" width="1" height="1" fill="#00ffff"/>
<rect x="877" y="681" width="1" height="1" fill="#00ffff"/>
<rect x="873" y="682" width="1" height="1" fill="#00ffff"/>
<rect x="873" y="683" width="5" height="1" fill="#00ffff"/>
<rect x="873" y="684" width="4" height="1" fill="#00ffff"/>
<rect x="881" y="677" width="4" height="1" fill="#00ffff"/>
<rect x="881" y="678" width="1" height="1" fill="#00ffff"/>
<rect x="881" y="679" width="1" height="1" fill="#00ffff"/>
<rect x="881" y="680" width="2" height="1" fill="#00ffff"/>
<rect x="881" y="681" width="1" height="1" fill="#00ffff"/>
<rect x="881" y="683" width="4" height="1" fill="#00ffff"/>
<rect x="785" y="686" width="1" height="1" fill="#00ffff"/>
<rect x="785" y="687" width="1" height="1" fill="#00ffff"/>
<rect x="788" y="687" width="1" height="1" fill="#00ffff"/>
<rect x="785" y="688" width="2" height="1" fill="#00ffff"/>
<rect x="788" y="688" width="1" height="1" fill="#00ffff"/>
<rect x="785" y="689" width="3" height="1" fill="#00ffff"/>
<rect x="785" y="690" width="1" height="1" fill="#00ffff"/>
<rect x="787" y="690" width="1" height="1" fill="#00ffff"/>
<rect x="785" y="691" width="2" height="1" fill="#00ffff"/>
<rect x="785" y="692" width="1" height="1" fill="#00ffff"/>
<rect x="791" y="687" width="6" height="1" fill="#00ffff"/>
<rect x="791" y="688" width="2" height="1" fill="#00ffff"/>
<rect x="791" y="689" width="1" height="1" fill="#00ffff"/>
<rect x="795" y="689" width="2" height="1" fill="#00ffff"/>
<rect x="791" y="690" width="1" height="1" fill="#00ffff"/>
<rect x="796" y="690" width="1" height="1" fill="#00ffff"/>
<rect x="791" y="691" width="4" height="1" fill="#00ffff"/>
<rect x="791" y="692" width="2" height="1" fill="#00ffff"/>
<rect x="796" y="692" width="1" height="1" fill="#00ffff"/>
<rect x="784" y="695" width="3" height="1" fill="#00ffff"/>
<rect x="785" y="696" width="1" height="1" fill="#00ffff"/>
<rect x="785" y="697" width="4" height="1" fill="#00ffff"/>
<rect x="785" y="698" width="2" height="1" fill="#00ffff"/>
<rect x="785" y="699" width="1" height="1" fill="#00ffff"/>
<rect x="787" y="699" width="1" height="1" fill="#00ffff"/>
<rect x="785" y="700" width="2" height="1" fill="#00ffff"/>
<rect x="785" y="701" width="1" height="1" fill="#00ffff"/>
<rect x="787" y="701" width="2" height="1" fill="#00ffff"/>
<rect x="791" y="695" width="6" height="1" fill="#00ffff"/>
<rect x="792" y="696" width="2" height="1" fill="#00ffff"/>
<rect x="791" y="697" width="1" height="1" fill="#00ffff"/>
<rect x="793" y="697" width="1" height="1" fill="#00ffff"/>
<rect x="793" y="698" width="1" height="1" fill="#00ffff"/>
<rect x="795" y="698" width="1" height="1" fill="#00ffff"/>
<rect x="791" y="699" width="3" height="1" fill="#00ffff"/>
<rect x="792" y="700" width="5" height="1" fill="#00ffff"/>
<rect x="793" y="701" width="1" height="1" fill="#00ffff"/>
<rect x="796" y="701" width="1" height="1" fill="#00ffff"/>
<rect x="787" y="704" width="1" height="1" fill="#00ffff"/>
<rect x="784" y="705" width="1" height="1" fill="#00ffff"/>
<rect x="786" y="705" width="1" height="1" fill="#00ffff"/>
<rect x="788" y="705" width="1" height="1" fill="#00ffff"/>
<rect x="786" y="706" width="2" height="1" fill="#00ffff"/>
<rect x="784" y="707" width="1" height="1" fill="#00ffff"/>
<rect x="786" y="707" width="1" height="1" fill="#00ffff"/>
<rect x="784" y="708" width="1" height="1" fill="#00ffff"/>
<rect x="786" y="708" width="2" height="1" fill="#00ffff"/>
<rect x="784" y="709" width="4" height="1" fill="#00ffff"/>
<rect x="784" y="710" width="5" height="1" fill="#00ffff"/>
<rect x="792" y="704" width="4" height="1" fill="#00ffff"/>
<rect x="793" y="705" width="1" height="1" fill="#00ffff"/>
<rect x="795" y="705" width="2" height="1" fill="#00ffff"/>
<rect x="793" y="706" width="2" height="1" fill="#00ffff"/>
<rect x="792" y="707" width="5" height="1" fill="#00ffff"/>
<rect x="795" y="708" width="1" height="1" fill="#00ffff"/>
<rect x="796" y="709" width="1" height="1" fill="#00ffff"/>
<rect x="784" y="713" width="4" height="1" fill="#00ffff"/>
<rect x="784" y="714" width="1" height="1" fill="#00ffff"/>
<rect x="787" y="714" width="1" height="1" fill="#00ffff"/>
<rect x="787" y="715" width="2" height="1" fill="#00ffff"/>
<rect x="787" y="716" width="1" height="1" fill="#00ffff"/>
<rect x="786" y="717" width="1" height="1" fill="#00ffff"/>
<rect x="787" y="718" width="1" height="1" fill="#00ffff"/>
<rect x="784" y="719" width="4" height="1" fill="#00ffff"/>
<rect x="791" y="713" width="1" height="1" fill="#00ffff"/>
<rect x="794" y="713" width="1" height="1" fill="#00ffff"/>
<rect x="791" y="714" width="6" height="1" fill="#00ffff"/>
<rect x="792" y="715" width="1" height="1" fill="#00ffff"/>
<rect x="792" y="716" width="3" height="1" fill="#00ffff"/>
<rect x="791" y="717" width="4" height="1" fill="#00ffff"/>
<rect x="792" y="718" width="1" height="1" fill="#00ffff"/>
<rect x="796" y="719" width="1" height="1" fill="#00ffff"/>
<rect x="836" y="687" width="1" height="1" fill="#00ffff"/>
<rect x="838" y="687" width="1" height="1" fill="#00ffff"/>
<rect x="836" y="688" width="1" height="1" fill="#00ffff"/>
<rect x="834" y="689" width="4" height="1" fill="#00ffff"/>
<rect x="835" y="690" width="3" height="1" fill="#00ffff"/>
<rect x="834" y="691" width="1" height="1" fill="#00ffff"/>
<rect x="836" y="691" width="1" height="1" fill="#00ffff"/>
<rect x="834" y="692" width="1" height="1" fill="#00ffff"/>
<rect x="836" y="692" width="1" height="1" fill="#00ffff"/>
<rect x="840" y="686" width="4" height="1" fill="#00ffff"/>
<rect x="840" y="687" width="1" height="1" fill="#00ffff"/>
<rect x="840" y="688" width="2" height="1" fill="#00ffff"/>
<rect x="840" y="689" width="2" height="1" fill="#00ffff"/>
<rect x="840" y="690" width="2" height="1" fill="#00ffff"/>
<rect x="840" y="691" width="1" height="1" fill="#00ffff"/>
<rect x="840" y="692" width="2" height="1" fill="#00ffff"/>
<rect x="843" y="692" width="1" height="1" fill="#00ffff"/>
<rect x="844" y="687" width="1" height="1" fill="#00ffff"/>
<rect x="846" y="687" width="1" height="1" fill="#00ffff"/>
<rect x="848" y="687" width="1" height="1" fill="#00ffff"/>
<rect x="844" y="688" width="3" height="1" fill="#00ffff"/>
<rect x="848" y="688" width="1" height="1" fill="#00ffff"/>
<rect x="844" y="689" width="1" height="1" fill="#00ffff"/>
<rect x="844" y="690" width="2" height="1" fill="#00ffff"/>
<rect x="848" y="690" width="1" height="1" fill="#00ffff"/>
<rect x="844" y="691" width="2" height="1" fill="#00ffff"/>
<rect x="848" y="691" width="1" height="1" fill="#00ffff"/>
<rect x="844" y="692" width="5" height="1" fill="#00ffff"/>
<rect x="838" y="695" width="1" height="1" fill="#00ffff"/>
<rect x="841" y="695" width="1" height="1" fill="#00ffff"/>
<rect x="837" y="696" width="1" height="1" fill="#00ffff"/>
<rect x="839" y="696" width="1" height="1" fill="#00ffff"/>
<rect x="841" y="696" width="1" height="1" fill="#00ffff"/>
<rect x="841" y="697" width="1" height="1" fill="#00ffff"/>
<rect x="837" y="698" width="5" height="1" fill="#00ffff"/>
<rect x="838" y="699" width="4" height="1" fill="#00ffff"/>
<rect x="837" y="700" width="1" height="1" fill="#00ffff"/>
<rect x="841" y="700" width="1" height="1" fill="#00ffff"/>
<rect x="839" y="701" width="1" height="1" fill="#00ffff"/>
<rect x="841" y="701" width="1" height="1" fill="#00ffff"/>
<rect x="845" y="695" width="1" height="1" fill="#00ffff"/>
<rect x="848" y="695" width="1" height="1" fill="#00ffff"/>
<rect x="848" y="696" width="1" height="1" fill="#00ffff"/>
<rect x="844" y="697" width="3" height="1" fill="#00ffff"/>
<rect x="848" y="697" width="1" height="1" fill="#00ffff"/>
<rect x="848" y="698" width="1" height="1" fill="#00ffff"/>
<rect x="845" y="699" width="1" height="1" fill="#00ffff"/>
<rect x="848" y="699" width="1" height="1" fill="#00ffff"/>
<rect x="845" y="701" width="4" height="1" fill="#00ffff"/>
<rect x="838" y="704" width="3" height="1" fill="#00ffff"/>
<rect x="838" y="705" width="3" height="1" fill="#00ffff"/>
<rect x="837" y="706" width="1" height="1" fill="#00ffff"/>
<rect x="840" y="706" width="1" height="1" fill="#00ffff"/>
<rect x="837" y="707" width="4" height="1" fill="#00ffff"/>
<rect x="840" y="708" width="1" height="1" fill="#00ffff"/>
<rect x="837" y="709" width="1" height="1" fill="#00ffff"/>
<rect x="839" y="709" width="3" height="1" fill="#00ffff"/>
<rect x="839" y="710" width="3" height="1" fill="#00ffff"/>
<rect x="844" y="704" width="5" height="1" fill="#00ffff"/>
<rect x="845" y="705" width="1" height="1" fill="#00ffff"/>
<rect x="844" y="706" width="2" height="1" fill="#00ffff"/>
<rect x="847" y="706" width="1" height="1" fill="#00ffff"/>
<rect x="845" y="707" width="1" height="1" fill="#00ffff"/>
<rect x="847" y="707" width="2" height="1" fill="#00ffff"/>
<rect x="844" y="708" width="5" height="1" fill="#00ffff"/>
<rect x="845" y="710" width="1" height="1" fill="#00ffff"/>
<rect x="837" y="713" width="4" height="1" fill="#00ffff"/>
<rect x="837" y="714" width="1" height="1" fill="#00ffff"/>
<rect x="840" y="714" width="1" height="1" fill="#00ffff"/>
<rect x="840" y="715" width="2" height="1" fill="#00ffff"/>
<rect x="840" y="716" width="1" height="1" fill="#00ffff"/>
<rect x="839" y="717" width="1" height="1" fill="#00ffff"/>
<rect x="840" y="718" width="1" height="1" fill="#00ffff"/>
<rect x="837" y="719" width="4" height="1" fill="#00ffff"/>
<rect x="844" y="713" width="1" height="1" fill="#00ffff"/>
<rect x="847" y="713" width="1" height="1" fill="#00ffff"/>
<rect x="844" y="714" width="5" height="1" fill="#00ffff"/>
<rect x="844" y="715" width="2" height="1" fill="#00ffff"/>
<rect x="845" y="716" width="1" height="1" fill="#00ffff"/>
<rect x="844" y="717" width="3" height="1" fill="#00ffff"/>
<rect x="848" y="717" width="1" height="1" fill="#00ffff"/>
<rect x="845" y="718" width="1" height="1" fill="#00ffff"/>
<rect x="883" y="688" width="3" height="1" fill="#00ffff"/>
<rect x="884" y="689" width="1" height="1" fill="#00ffff"/>
<rect x="884" y="690" width="4" height="1" fill="#00ffff"/>
<rect x="884" y="691" width="2" height="1" fill="#00ffff"/>
<rect x="884" y="692" width="1" height="1" fill="#00ffff"/>
<rect x="886" y="692" width="1" height="1" fill="#00ffff"/>
<rect x="884" y="693" width="2" height="1" fill="#00ffff"/>
<rect x="884" y="694" width="1" height="1" fill="#00ffff"/>
<rect x="886" y="694" width="2" height="1" fill="#00ffff"/>
<rect x="893" y="688" width="5" height="1" fill="#00ffff"/>
<rect x="893" y="689" width="3" height="1" fill="#00ffff"/>
<rect x="893" y="690" width="5" height="1" fill="#00ffff"/>
<rect x="893" y="691" width="1" height="1" fill="#00ffff"/>
<rect x="893" y="692" width="1" height="1" fill="#00ffff"/>
<rect x="895" y="692" width="1" height="1" fill="#00ffff"/>
<rect x="893" y="693" width="2" height="1" fill="#00ffff"/>
<rect x="897" y="694" width="1" height="1" fill="#00ffff"/>
<rect x="904" y="688" width="2" height="1" fill="#00ffff"/>
<rect x="907" y="688" width="2" height="1" fill="#00ffff"/>
<rect x="904" y="689" width="2" height="1" fill="#00ffff"/>
<rect x="905" y="690" width="2" height="1" fill="#00ffff"/>
<rect x="908" y="690" width="1" height="1" fill="#00ffff"/>
<rect x="905" y="691" width="1" height="1" fill="#00ffff"/>
<rect x="907" y="691" width="2" height="1" fill="#00ffff"/>
<rect x="905" y="692" width="1" height="1" fill="#00ffff"/>
<rect x="904" y="693" width="5" height="1" fill="#00ffff"/>
<rect x="914" y="688" width="3" height="1" fill="#00ffff"/>
<rect x="918" y="688" width="1" height="1" fill="#00ffff"/>
<rect x="914" y="689" width="3" height="1" fill="#00ffff"/>
<rect x="918" y="689" width="1" height="1" fill="#00ffff"/>
<rect x="914" y="690" width="3" height="1" fill="#00ffff"/>
<rect x="914" y="691" width="2" height="1" fill="#00ffff"/>
<rect x="917" y="691" width="1" height="1" fill="#00ffff"/>
<rect x="914" y="692" width="1" height="1" fill="#00ffff"/>
<rect x="914" y="693" width="2" height="1" fill="#00ffff"/>
<rect x="918" y="693" width="1" height="1" fill="#00ffff"/>
<rect x="914" y="694" width="1" height="1" fill="#00ffff"/>
<rect x="917" y="694" width="1" height="1" fill="#00ffff"/>
<rect x="919" y="688" width="2" height="1" fill="#00ffff"/>
<rect x="920" y="689" width="1" height="1" fill="#00ffff"/>
<rect x="920" y="690" width="4" height="1" fill="#00ffff"/>
<rect x="920" y="691" width="1" height="1" fill="#00ffff"/>
<rect x="920" y="692" width="4" height="1" fill="#00ffff"/>
<rect x="920" y="693" width="4" height="1" fill="#00ffff"/>
<rect x="920" y="694" width="1" height="1" fill="#00ffff"/>
<rect x="922" y="694" width="1" height="1" fill="#00ffff"/>
<rect x="930" y="688" width="1" height="1" fill="#00ffff"/>
<rect x="930" y="689" width="1" height="1" fill="#00ffff"/>
<rect x="930" y="690" width="1" height="1" fill="#00ffff"/>
<rect x="929" y="691" width="2" height="1" fill="#00ffff"/>
<rect x="927" y="692" width="5" height="1" fill="#00ffff"/>
<rect x="927" y="693" width="2" height="1" fill="#00ffff"/>
<rect x="930" y="693" width="2" height="1" fill="#00ffff"/>
<rect x="930" y="694" width="1" height="1" fill="#00ffff"/>
<rect x="935" y="688" width="1" height="1" fill="#00ffff"/>
<rect x="939" y="688" width="1" height="1" fill="#00ffff"/>
<rect x="935" y="689" width="2" height="1" fill="#00ffff"/>
<rect x="939" y="689" width="1" height="1" fill="#00ffff"/>
<rect x="935" y="690" width="1" height="1" fill="#00ffff"/>
<rect x="939" y="690" width="1" height="1" fill="#00ffff"/>
<rect x="937" y="691" width="3" height="1" fill="#00ffff"/>
<rect x="939" y="692" width="1" height="1" fill="#00ffff"/>
<rect x="935" y="693" width="1" height="1" fill="#00ffff"/>
<rect x="939" y="693" width="1" height="1" fill="#00ffff"/>
<rect x="935" y="694" width="5" height="1" fill="#00ffff"/>
<rect x="942" y="688" width="1" height="1" fill="#00ffff"/>
<rect x="944" y="688" width="1" height="1" fill="#00ffff"/>
<rect x="942" y="689" width="5" height="1" fill="#00ffff"/>
<rect x="942" y="690" width="1" height="1" fill="#00ffff"/>
<rect x="945" y="690" width="1" height="1" fill="#00ffff"/>
<rect x="942" y="691" width="1" height="1" fill="#00ffff"/>
<rect x="945" y="691" width="1" height="1" fill="#00ffff"/>
<rect x="942" y="692" width="5" height="1" fill="#00ffff"/>
<rect x="942" y="693" width="3" height="1" fill="#00ffff"/>
<rect x="942" y="694" width="1" height="1" fill="#00ffff"/>
<rect x="899" y="711" width="3" height="1" fill="#00ffff"/>
<rect x="901" y="712" width="1" height="1" fill="#00ffff"/>
<rect x="898" y="713" width="4" height="1" fill="#00ffff"/>
<rect x="898" y="714" width="4" height="1" fill="#00ffff"/>
<rect x="901" y="715" width="2" height="1" fill="#00ffff"/>
<rect x="898" y="716" width="1" height="1" fill="#00ffff"/>
<rect x="900" y="716" width="3" height="1" fill="#00ffff"/>
<rect x="900" y="717" width="3" height="1" fill="#00ffff"/>
<rect x="899" y="718" width="3" height="1" fill="#00ffff"/>
<rect x="907" y="711" width="1" height="1" fill="#00ffff"/>
<rect x="906" y="712" width="3" height="1" fill="#00ffff"/>
<rect x="907" y="713" width="1" height="1" fill="#00ffff"/>
<rect x="910" y="713" width="1" height="1" fill="#00ffff"/>
<rect x="906" y="714" width="2" height="1" fill="#00ffff"/>
<rect x="907" y="715" width="3" height="1" fill="#00ffff"/>
<rect x="907" y="716" width="1" height="1" fill="#00ffff"/>
<rect x="910" y="716" width="1" height="1" fill="#00ffff"/>
<rect x="906" y="717" width="3" height="1" fill="#00ffff"/>
<rect x="910" y="717" width="1" height="1" fill="#00ffff"/>
<rect x="910" y="718" width="1" height="1" fill="#00ffff"/>
<rect x="919" y="711" width="2" height="1" fill="#00ffff"/>
<rect x="920" y="712" width="1" height="1" fill="#00ffff"/>
<rect x="922" y="712" width="1" height="1" fill="#00ffff"/>
<rect x="919" y="713" width="5" height="1" fill="#00ffff"/>
<rect x="922" y="714" width="1" height="1" fill="#00ffff"/>
<rect x="919" y="715" width="1" height="1" fill="#00ffff"/>
<rect x="922" y="715" width="1" height="1" fill="#00ffff"/>
<rect x="919" y="716" width="1" height="1" fill="#00ffff"/>
<rect x="921" y="716" width="1" height="1" fill="#00ffff"/>
<rect x="920" y="717" width="4" height="1" fill="#00ffff"/>
<rect x="923" y="718" width="1" height="1" fill="#00ffff"/>
<rect x="927" y="711" width="4" height="1" fill="#00ffff"/>
<rect x="927" y="712" width="3" height="1" fill="#00ffff"/>
<rect x="931" y="712" width="1" height="1" fill="#00ffff"/>
<rect x="928" y="713" width="1" height="1" fill="#00ffff"/>
<rect x="931" y="713" width="1" height="1" fill="#00ffff"/>
<rect x="927" y="714" width="2" height="1" fill="#00ffff"/>
<rect x="931" y="714" width="1" height="1" fill="#00ffff"/>
<rect x="928" y="715" width="2" height="1" fill="#00ffff"/>
<rect x="931" y="715" width="1" height="1" fill="#00ffff"/>
<rect x="928" y="716" width="1" height="1" fill="#00ffff"/>
<rect x="930" y="718" width="1" height="1" fill="#00ffff"/>
<rect x="967" y="679" width="2" height="1" fill="#00ffff"/>
<rect x="970" y="679" width="1" height="1" fill="#00ffff"/>
<rect x="964" y="680" width="2" height="1" fill="#00ffff"/>
<rect x="967" y="680" width="4" height="1" fill="#00ffff"/>
<rect x="964" y="681" width="1" height="1" fill="#00ffff"/>
<rect x="966" y="681" width="2" height="1" fill="#00ffff"/>
<rect x="969" y="681" width="1" height="1" fill="#00ffff"/>
<rect x="967" y="682" width="1" height="1" fill="#00ffff"/>
<rect x="967" y="683" width="1" height="1" fill="#00ffff"/>
<rect x="964" y="684" width="2" height="1" fill="#00ffff"/>
<rect x="967" y="684" width="1" height="1" fill="#00ffff"/>
<rect x="969" y="684" width="1" height="1" fill="#00ffff"/>
<rect x="966" y="685" width="2" height="1" fill="#00ffff"/>
<rect x="970" y="685" width="1" height="1" fill="#00ffff"/>
<rect x="965" y="686" width="6" height="1" fill="#00ffff"/>
<rect x="964" y="687" width="2" height="1" fill="#00ffff"/>
<rect x="967" y="687" width="3" height="1" fill="#00ffff"/>
<rect x="964" y="688" width="4" height="1" fill="#00ffff"/>
<rect x="971" y="680" width="1" height="1" fill="#00ffff"/>
<rect x="977" y="680" width="1" height="1" fill="#00ffff"/>
<rect x="971" y="681" width="1" height="1" fill="#00ffff"/>
<rect x="976" y="681" width="1" height="1" fill="#00ffff"/>
<rect x="971" y="682" width="1" height="1" fill="#00ffff"/>
<rect x="975" y="682" width="1" height="1" fill="#00ffff"/>
<rect x="971" y="683" width="1" height="1" fill="#00ffff"/>
<rect x="973" y="683" width="5" height="1" fill="#00ffff"/>
<rect x="971" y="684" width="2" height="1" fill="#00ffff"/>
<rect x="977" y="684" width="1" height="1" fill="#00ffff"/>
<rect x="971" y="685" width="1" height="1" fill="#00ffff"/>
<rect x="973" y="685" width="1" height="1" fill="#00ffff"/>
<rect x="976" y="685" width="2" height="1" fill="#00ffff"/>
<rect x="971" y="686" width="1" height="1" fill="#00ffff"/>
<rect x="974" y="686" width="1" height="1" fill="#00ffff"/>
<rect x="976" y="686" width="1" height="1" fill="#00ffff"/>
<rect x="974" y="687" width="1" height="1" fill="#00ffff"/>
<rect x="977" y="687" width="1" height="1" fill="#00ffff"/>
<rect x="971" y="688" width="7" height="1" fill="#00ffff"/>
<rect x="980" y="679" width="2" height="1" fill="#00ffff"/>
<rect x="980" y="680" width="1" height="1" fill="#00ffff"/>
<rect x="982" y="681" width="3" height="1" fill="#00ffff"/>
<rect x="979" y="682" width="1" height="1" fill="#00ffff"/>
<rect x="982" y="682" width="3" height="1" fill="#00ffff"/>
<rect x="978" y="683" width="1" height="1" fill="#00ffff"/>
<rect x="982" y="683" width="3" height="1" fill="#00ffff"/>
<rect x="982" y="684" width="1" height="1" fill="#00ffff"/>
<rect x="978" y="685" width="3" height="1" fill="#00ffff"/>
<rect x="982" y="685" width="3" height="1" fill="#00ffff"/>
<rect x="978" y="686" width="1" height="1" fill="#00ffff"/>
<rect x="982" y="686" width="1" height="1" fill="#00ffff"/>
<rect x="978" y="687" width="4" height="1" fill="#00ffff"/>
<rect x="987" y="679" width="1" height="1" fill="#00ffff"/>
<rect x="985" y="680" width="2" height="1" fill="#00ffff"/>
<rect x="988" y="680" width="2" height="1" fill="#00ffff"/>
<rect x="986" y="681" width="3" height="1" fill="#00ffff"/>
<rect x="986" y="682" width="2" height="1" fill="#00ffff"/>
<rect x="990" y="682" width="1" height="1" fill="#00ffff"/>
<rect x="985" y="683" width="6" height="1" fill="#00ffff"/>
<rect x="987" y="684" width="3" height="1" fill="#00ffff"/>
<rect x="985" y="685" width="1" height="1" fill="#00ffff"/>
<rect x="987" y="685" width="1" height="1" fill="#00ffff"/>
<rect x="990" y="685" width="1" height="1" fill="#00ffff"/>
<rect x="986" y="686" width="3" height="1" fill="#00ffff"/>
<rect x="986" y="687" width="5" height="1" fill="#00ffff"/>
<rect x="987" y="688" width="1" height="1" fill="#00ffff"/>
<rect x="989" y="688" width="2" height="1" fill="#00ffff"/>
<rect x="996" y="679" width="1" height="1" fill="#00ffff"/>
<rect x="991" y="680" width="1" height="1" fill="#00ffff"/>
<rect x="993" y="680" width="1" height="1" fill="#00ffff"/>
<rect x="995" y="680" width="1" height="1" fill="#00ffff"/>
<rect x="991" y="681" width="3" height="1" fill="#00ffff"/>
<rect x="997" y="681" width="1" height="1" fill="#00ffff"/>
<rect x="992" y="682" width="1" height="1" fill="#00ffff"/>
<rect x="994" y="682" width="1" height="1" fill="#00ffff"/>
<rect x="997" y="682" width="1" height="1" fill="#00ffff"/>
<rect x="991" y="683" width="1" height="1" fill="#00ffff"/>
<rect x="995" y="683" width="1" height="1" fill="#00ffff"/>
<rect x="997" y="683" width="1" height="1" fill="#00ffff"/>
<rect x="992" y="684" width="6" height="1" fill="#00ffff"/>
<rect x="995" y="685" width="1" height="1" fill="#00ffff"/>
<rect x="997" y="685" width="1" height="1" fill="#00ffff"/>
<rect x="996" y="686" width="2" height="1" fill="#00ffff"/>
<rect x="992" y="687" width="1" height="1" fill="#00ffff"/>
<rect x="995" y="687" width="1" height="1" fill="#00ffff"/>
<rect x="997" y="687" width="1" height="1" fill="#00ffff"/>
<rect x="992" y="688" width="5" height="1" fill="#00ffff"/>
<path transform="translate(906.50 663.50)" d="M1.90 0.00L1.90 0.85L0.95 1.70L0.95 4.25L0.00 5.10L0.00 5.95L4.75 5.95M3.80 4.25L3.80 7.65M11.40 0.00L7.60 0.00L7.60 3.40L10.45 3.40L11.40 4.25L11.40 6.80L10.45 7.65L7.60 7.65M15.20 0.85L15.20 7.65M17.10 0.85L17.10 7.65M14.25 2.55L18.05 2.55M14.25 5.10L18.05 5.10" stroke="#ff0000"/>
<path transform="translate(934.50 701.50)" d="M1.20 0.00L1.20 5.85M0.00 1.30L0.60 0.65M3.60 1.30L3.60 1.95M3.60 4.55L3.60 5.20M4.80 0.65L5.40 0.00L7.20 0.00L7.20 1.95L5.40 4.55L5.40 5.20L4.80 5.85L7.20 5.85" stroke="#ff0000"/>
<path transform="translate(963.50 707.50)" d="M0.00 3.00L2.55 3.00L3.40 2.25L3.40 0.75L2.55 0.00L0.00 0.00L0.00 6.75L2.55 6.75L3.40 6.00L3.40 3.75L2.55 3.00M5.95 0.00L9.35 0.00M7.65 0.00L7.65 6.75M11.90 3.75L15.30 3.75M18.70 0.00L18.70 6.75M17.00 1.50L17.85 0.75M22.95 0.00L22.95 0.75L22.10 1.50L22.10 3.75L21.25 4.50L21.25 5.25L25.50 5.25M24.65 3.75L24.65 6.75" stroke="#ff0000"/>
</svg>
</body></html>
